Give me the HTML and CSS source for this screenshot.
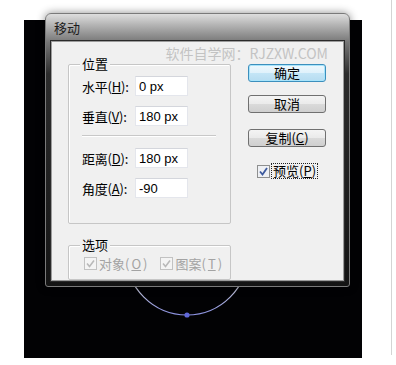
FILE: index.html
```html
<!DOCTYPE html>
<html lang="zh-CN">
<head>
  <meta charset="UTF-8" />
  <title>移动</title>
  <link rel="stylesheet" href="styles.css">
</head>
<body>
  <div class="page">
    <div class="stage">
      <!-- guide circle behind the dialog -->
      <svg class="arc" width="338" height="338" viewBox="0 0 338 338">
        <defs>
          <linearGradient id="arcGrad" x1="0" y1="0" x2="0" y2="1">
            <stop offset="0" stop-color="#e0e0e0" />
            <stop offset="0.75" stop-color="#c4c6d2" />
            <stop offset="1" stop-color="#8a90e0" />
          </linearGradient>
        </defs>
        <circle cx="163" cy="234" r="61" fill="none" stroke="url(#arcGrad)" stroke-width="1.2" />
        <circle cx="163" cy="295" r="2.6" fill="#6068d8" />
      </svg>

      <!-- MOVE DIALOG -->
      <div class="dialog">
        <div class="titlebar">移动</div>
        <div class="client">
          <div class="watermark">软件自学网：RJZXW.COM</div>
          <div class="cols">
            <div class="left">
              <div class="group position">
                <span class="legend">位置</span>
                <div class="row">
                  <label class="lbl">水平(<u>H</u>):</label>
                  <input class="field" type="text" value="0 px" />
                </div>
                <div class="row">
                  <label class="lbl">垂直(<u>V</u>):</label>
                  <input class="field" type="text" value="180 px" />
                </div>
                <div class="sep"></div>
                <div class="row">
                  <label class="lbl">距离(<u>D</u>):</label>
                  <input class="field" type="text" value="180 px" />
                </div>
                <div class="row">
                  <label class="lbl">角度(<u>A</u>):</label>
                  <input class="field" type="text" value="-90" />
                </div>
              </div>

              <div class="group options">
                <span class="legend">选项</span>
                <div class="checks">
                  <span class="check disabled">
                    <svg width="13" height="13" viewBox="0 0 13 13"><rect x="0.5" y="0.5" width="12" height="12" fill="#f4f4f4" stroke="#c2c2c2" /><path d="M3 6.5 L5.5 9.5 L10 3.5" fill="none" stroke="#b9b9b9" stroke-width="1.6" /></svg>
                    对象(<u>O</u>)
                  </span>
                  <span class="check disabled">
                    <svg width="13" height="13" viewBox="0 0 13 13"><rect x="0.5" y="0.5" width="12" height="12" fill="#f4f4f4" stroke="#c2c2c2" /><path d="M3 6.5 L5.5 9.5 L10 3.5" fill="none" stroke="#b9b9b9" stroke-width="1.6" /></svg>
                    图案(<u>T</u>)
                  </span>
                </div>
              </div>
            </div>

            <div class="right">
              <button class="btn default">确定</button>
              <button class="btn cancel">取消</button>
              <button class="btn copy">复制(<u>C</u>)</button>
              <span class="check preview">
                <svg width="13" height="13" viewBox="0 0 13 13"><rect x="0.5" y="0.5" width="12" height="12" fill="#eef0f4" stroke="#8e8f8f" /><path d="M3 6.5 L5.5 9.5 L10 3" fill="none" stroke="#3d5a9e" stroke-width="1.8" /></svg>
                <span class="focus">预览(<u>P</u>)</span>
              </span>
            </div>
          </div>
        </div>
      </div>
    </div>
    <div class="rule"></div>
  </div>
</body>
</html>
```

FILE: styles.css
```css
body {
  margin: 0;
  background-color: #fff;
  font-family: "Noto Sans CJK SC", sans-serif;
  font-size: 13px;
  color: #000;
}
.page {
  display: flex;
  align-items: flex-start;
  padding-left: 24px;
}
.stage {
  position: relative;
  width: 338px;
  height: 338px;
  margin-top: 20px;
  background-color: #020204;
}
.arc {
  display: block;
}
.rule {
  width: 1px;
  height: 355px;
  margin-left: 29px;
  background-color: #d4d4d4;
}

/* dialog window */
.dialog {
  position: absolute;
  left: 21px;
  top: -7px;
  width: 293px;
  height: 267px;
  border: 1px solid #7a7a7a;
  border-radius: 6px 6px 3px 3px;
  background: linear-gradient(to bottom, #dedede 0, #b0b0b0 12px, #777 28px, #2c2c2c 60px, #141414 100%);
  box-shadow: 0 0 8px rgba(0, 0, 0, 0.45);
  display: flex;
  flex-direction: column;
  padding: 0 5px 5px 5px;
}
.titlebar {
  height: 28px;
  display: flex;
  align-items: center;
  padding-left: 3px;
  font-size: 13px;
  color: #1c1c1c;
}
.client {
  position: relative;
  flex: 1;
  background-color: #f0f0f0;
  border: 1px solid #9c9c9c;
  box-shadow: 0 0 0 1px #2a2a2a;
  padding: 22px 0 0 16px;
}
.watermark {
  position: absolute;
  top: 1px;
  right: 15px;
  font-size: 14px;
  color: #c3c3c3;
  white-space: nowrap;
}
.cols {
  display: flex;
  gap: 17px;
}
.left {
  width: 163px;
  display: flex;
  flex-direction: column;
  gap: 21px;
}

/* group boxes */
.group {
  position: relative;
  border: 1px solid #c6c6c6;
  border-radius: 2px;
  box-shadow: inset 1px 1px 0 #fff;
}
.legend {
  position: absolute;
  top: -9px;
  left: 11px;
  padding: 0 2px;
  line-height: 16px;
  background-color: #f0f0f0;
}
.position {
  height: 140px;
  padding: 11px 14px 7px 13px;
  display: flex;
  flex-direction: column;
  gap: 10px;
}
.row {
  display: flex;
  align-items: center;
  height: 20px;
}
.lbl {
  width: 53px;
  white-space: nowrap;
  letter-spacing: -0.2px;
}
.field {
  box-sizing: border-box;
  width: 53px;
  height: 20px;
  margin: 0;
  padding: 0 3px;
  border: 1px solid #e4e6ec;
  border-top-color: #d4d6dc;
  background-color: #fff;
  font-family: "Liberation Sans", sans-serif;
  font-size: 13px;
  color: #000;
}
.sep {
  height: 0;
  border-top: 1px solid #c8c8c8;
  border-bottom: 1px solid #fff;
  margin: -1px 0 1px 0;
}
.options {
  box-sizing: border-box;
  height: 35px;
  padding: 10px 0 0 15px;
}
.checks {
  display: flex;
  gap: 13px;
}
.check {
  display: flex;
  align-items: center;
  gap: 2px;
  height: 14px;
  white-space: nowrap;
}
.check svg {
  display: block;
}
.disabled {
  color: #a3a3a3;
}

/* buttons */
.right {
  width: 78px;
  display: flex;
  flex-direction: column;
}
.btn {
  box-sizing: border-box;
  width: 78px;
  height: 18px;
  margin: 0;
  padding: 0;
  border: 1px solid #707070;
  border-radius: 3px;
  background: linear-gradient(to bottom, #f4f4f4 0, #eaeaea 50%, #dadada 51%, #cfcfcf 100%);
  font-family: "Noto Sans CJK SC", sans-serif;
  font-size: 13px;
  line-height: 16px;
  color: #000;
}
.default {
  border-color: #3c8fbd;
  background: linear-gradient(to bottom, #eef8fd 0, #dff1fb 50%, #c4e5f6 51%, #b6dcf1 100%);
  box-shadow: inset 0 0 0 1px #a8e4fb;
}
.cancel {
  margin-top: 13px;
}
.copy {
  margin-top: 16px;
}
.preview {
  margin-top: 17px;
  margin-left: 9px;
}
.focus {
  outline: 1px dotted #222;
  padding: 0 1px;
  line-height: 14px;
}
```
